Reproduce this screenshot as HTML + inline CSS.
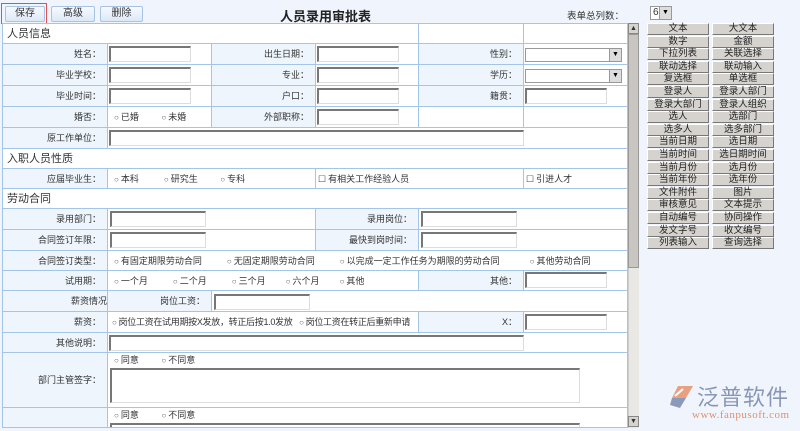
<!DOCTYPE html>
<html><head><meta charset="utf-8">
<style>
*{margin:0;padding:0;box-sizing:border-box}
body{width:800px;height:431px;overflow:hidden;background:#f0f5fd;font-family:"Liberation Sans","Noto Sans CJK SC",sans-serif;font-size:9px;color:#333;position:relative}
.a{position:absolute}
.btn{position:absolute;top:6px;height:16px;border:1px solid #a9c3e3;background:linear-gradient(#f7faff,#dce8f7);text-align:center;line-height:14px;font-size:10px;color:#333;border-radius:2px}
.form{position:absolute;left:2px;top:23px;width:626px;height:405px;background:#fff;border:1px solid #a3c6e8;overflow:hidden}
.c{position:absolute;border-right:1px solid #a3c6e8;border-bottom:1px solid #a3c6e8;background:#fff;white-space:nowrap;line-height:21px;font-size:9px}
.l{background:#eef5fd;text-align:right;padding-right:6px}
.sec{font-size:11px;padding-left:4px;color:#333}
.in{position:absolute;height:16px;border:1px solid #ddd;border-top:2px solid #777;border-left:2px solid #777;background:#fff}
.sel{position:absolute;height:14px;border:1px solid #999;background:#fff}
.arr{position:absolute;right:0;top:0;width:12px;height:12px;background:#ddd;border-left:1px solid #999;font-size:7px;line-height:12px;text-align:center;color:#000}
.r::before{content:"○";font-size:8px;margin-right:2px;color:#555}
.k::before{content:"☐";font-size:9px;margin-right:2px;color:#444}
.pb{position:absolute;width:62px;height:12px;background:#d6d3ce;border:1px solid #fff;border-right-color:#777;border-bottom-color:#777;font-size:9.5px;line-height:10px;text-align:center;color:#222}
</style></head><body>
<div class="btn" style="left:5px;width:40px">保存</div>
<div class="a" style="left:1px;top:3px;width:46px;height:21px;border:1px solid #e05050"></div>
<div class="btn" style="left:51px;width:44px">高级</div>
<div class="btn" style="left:100px;width:43px">删除</div>
<div class="a" style="left:280px;top:6px;font-size:13px;font-weight:bold;color:#222">人员录用审批表</div>
<div class="a" style="left:567px;top:8px;font-size:9.5px">表单总列数：</div>
<div class="sel" style="left:650px;top:6px;width:22px;font-size:10px;line-height:12px;padding-left:2px">6<span class="arr">▼</span></div>

<div class="form">
<div class="c sec" style="left:0;top:0;width:416px;height:20px;line-height:20px">人员信息</div>
<div class="c" style="left:416px;top:0;width:105px;height:20px"></div>
<div class="c" style="left:521px;top:0;width:110px;height:20px"></div>

<div class="c l" style="left:0;top:20px;width:105px;height:21px">姓名：</div>
<div class="c" style="left:105px;top:20px;width:104px;height:21px"></div>
<div class="c l" style="left:209px;top:20px;width:104px;height:21px">出生日期：</div>
<div class="c" style="left:313px;top:20px;width:103px;height:21px"></div>
<div class="c l" style="left:416px;top:20px;width:105px;height:21px">性别：</div>
<div class="c" style="left:521px;top:20px;width:110px;height:21px"></div>

<div class="c l" style="left:0;top:41px;width:105px;height:21px">毕业学校：</div>
<div class="c" style="left:105px;top:41px;width:104px;height:21px"></div>
<div class="c l" style="left:209px;top:41px;width:104px;height:21px">专业：</div>
<div class="c" style="left:313px;top:41px;width:103px;height:21px"></div>
<div class="c l" style="left:416px;top:41px;width:105px;height:21px">学历：</div>
<div class="c" style="left:521px;top:41px;width:110px;height:21px"></div>

<div class="c l" style="left:0;top:62px;width:105px;height:21px">毕业时间：</div>
<div class="c" style="left:105px;top:62px;width:104px;height:21px"></div>
<div class="c l" style="left:209px;top:62px;width:104px;height:21px">户口：</div>
<div class="c" style="left:313px;top:62px;width:103px;height:21px"></div>
<div class="c l" style="left:416px;top:62px;width:105px;height:21px">籍贯：</div>
<div class="c" style="left:521px;top:62px;width:110px;height:21px"></div>

<div class="c l" style="left:0;top:83px;width:105px;height:21px">婚否：</div>
<div class="c" style="left:105px;top:83px;width:104px;height:21px;padding-left:6px"><span class="r">已婚</span>&nbsp;&nbsp;&nbsp;&nbsp;&nbsp;&nbsp;&nbsp;&nbsp;&nbsp;<span class="r">未婚</span></div>
<div class="c l" style="left:209px;top:83px;width:104px;height:21px">外部职称：</div>
<div class="c" style="left:313px;top:83px;width:103px;height:21px"></div>
<div class="c" style="left:416px;top:83px;width:105px;height:21px"></div>
<div class="c" style="left:521px;top:83px;width:110px;height:21px"></div>

<div class="c l" style="left:0;top:104px;width:105px;height:21px">原工作单位：</div>
<div class="c" style="left:105px;top:104px;width:526px;height:21px"></div>

<div class="c sec" style="left:0;top:125px;width:631px;height:20px;line-height:20px">入职人员性质</div>
<div class="c l" style="left:0;top:145px;width:105px;height:20px;line-height:20px">应届毕业生：</div>
<div class="c" style="left:105px;top:145px;width:208px;height:20px;line-height:20px;padding-left:6px"><span class="r">本科</span>&nbsp;&nbsp;&nbsp;&nbsp;&nbsp;&nbsp;&nbsp;&nbsp;&nbsp;&nbsp;<span class="r">研究生</span>&nbsp;&nbsp;&nbsp;&nbsp;&nbsp;&nbsp;&nbsp;&nbsp;&nbsp;<span class="r">专科</span></div>
<div class="c" style="left:313px;top:145px;width:208px;height:20px;line-height:20px;padding-left:2px"><span class="k">有相关工作经验人员</span></div>
<div class="c" style="left:521px;top:145px;width:110px;height:20px;line-height:20px;padding-left:2px"><span class="k">引进人才</span></div>

<div class="c sec" style="left:0;top:165px;width:631px;height:20px;line-height:20px">劳动合同</div>
<div class="c l" style="left:0;top:185px;width:105px;height:21px">录用部门：</div>
<div class="c" style="left:105px;top:185px;width:208px;height:21px"></div>
<div class="c l" style="left:313px;top:185px;width:103px;height:21px">录用岗位：</div>
<div class="c" style="left:416px;top:185px;width:215px;height:21px"></div>
<div class="c l" style="left:0;top:206px;width:105px;height:21px">合同签订年限：</div>
<div class="c" style="left:105px;top:206px;width:208px;height:21px"></div>
<div class="c l" style="left:313px;top:206px;width:103px;height:21px">最快到岗时间：</div>
<div class="c" style="left:416px;top:206px;width:215px;height:21px"></div>

<div class="c l" style="left:0;top:227px;width:105px;height:20px;line-height:20px">合同签订类型：</div>
<div class="c" style="left:105px;top:227px;width:526px;height:20px;line-height:20px;padding-left:6px"><span class="r">有固定期限劳动合同</span>&nbsp;&nbsp;&nbsp;&nbsp;&nbsp;&nbsp;&nbsp;&nbsp;&nbsp;&nbsp;<span class="r">无固定期限劳动合同</span>&nbsp;&nbsp;&nbsp;&nbsp;&nbsp;&nbsp;&nbsp;&nbsp;&nbsp;&nbsp;<span class="r">以完成一定工作任务为期限的劳动合同</span>&nbsp;&nbsp;&nbsp;&nbsp;&nbsp;&nbsp;&nbsp;&nbsp;&nbsp;&nbsp;&nbsp;&nbsp;<span class="r">其他劳动合同</span></div>

<div class="c l" style="left:0;top:247px;width:105px;height:20px;line-height:20px">试用期：</div>
<div class="c" style="left:105px;top:247px;width:311px;height:20px;line-height:20px;padding-left:6px"><span class="r">一个月</span>&nbsp;&nbsp;&nbsp;&nbsp;&nbsp;&nbsp;&nbsp;&nbsp;&nbsp;&nbsp;<span class="r">二个月</span>&nbsp;&nbsp;&nbsp;&nbsp;&nbsp;&nbsp;&nbsp;&nbsp;&nbsp;&nbsp;<span class="r">三个月</span>&nbsp;&nbsp;&nbsp;&nbsp;&nbsp;&nbsp;&nbsp;&nbsp;<span class="r">六个月</span>&nbsp;&nbsp;&nbsp;&nbsp;&nbsp;&nbsp;&nbsp;&nbsp;<span class="r">其他</span></div>
<div class="c l" style="left:416px;top:247px;width:105px;height:20px;line-height:20px">其他：</div>
<div class="c" style="left:521px;top:247px;width:110px;height:20px"></div>

<div class="c l" style="left:0;top:267px;width:105px;height:21px;padding-right:0">薪资情况</div>
<div class="c l" style="left:105px;top:267px;width:104px;height:21px">岗位工资：</div>
<div class="c" style="left:209px;top:267px;width:422px;height:21px"></div>

<div class="c l" style="left:0;top:288px;width:105px;height:21px">薪资：</div>
<div class="c" style="left:105px;top:288px;width:311px;height:21px;padding-left:4px;letter-spacing:-0.3px"><span class="r">岗位工资在试用期按X发放，转正后按1.0发放</span>&nbsp;&nbsp;&nbsp;<span class="r">岗位工资在转正后重新申请</span></div>
<div class="c l" style="left:416px;top:288px;width:105px;height:21px">X：</div>
<div class="c" style="left:521px;top:288px;width:110px;height:21px"></div>

<div class="c l" style="left:0;top:309px;width:105px;height:20px;line-height:20px">其他说明：</div>
<div class="c" style="left:105px;top:309px;width:526px;height:20px"></div>

<div class="c l" style="left:0;top:329px;width:105px;height:55px;line-height:55px">部门主管签字：</div>
<div class="c" style="left:105px;top:329px;width:526px;height:55px;line-height:14px;padding-left:6px"><span class="r">同意</span>&nbsp;&nbsp;&nbsp;&nbsp;&nbsp;&nbsp;&nbsp;&nbsp;&nbsp;<span class="r">不同意</span></div>
<div class="c l" style="left:0;top:384px;width:105px;height:30px"></div>
<div class="c" style="left:105px;top:384px;width:526px;height:30px;line-height:14px;padding-left:6px"><span class="r">同意</span>&nbsp;&nbsp;&nbsp;&nbsp;&nbsp;&nbsp;&nbsp;&nbsp;&nbsp;<span class="r">不同意</span></div>

<div class="in" style="left:106px;top:22px;width:82px"></div>
<div class="in" style="left:314px;top:22px;width:82px"></div>
<div class="sel" style="left:522px;top:24px;width:97px"><span class="arr">▼</span></div>
<div class="in" style="left:106px;top:43px;width:82px"></div>
<div class="in" style="left:314px;top:43px;width:82px"></div>
<div class="sel" style="left:522px;top:45px;width:97px"><span class="arr">▼</span></div>
<div class="in" style="left:106px;top:64px;width:82px"></div>
<div class="in" style="left:314px;top:64px;width:82px"></div>
<div class="in" style="left:522px;top:64px;width:82px"></div>
<div class="in" style="left:314px;top:85px;width:82px"></div>
<div class="in" style="left:106px;top:106px;width:415px"></div>
<div class="in" style="left:107px;top:187px;width:96px"></div>
<div class="in" style="left:418px;top:187px;width:96px"></div>
<div class="in" style="left:107px;top:208px;width:96px"></div>
<div class="in" style="left:418px;top:208px;width:96px"></div>
<div class="in" style="left:522px;top:248px;width:82px"></div>
<div class="in" style="left:211px;top:270px;width:96px"></div>
<div class="in" style="left:522px;top:290px;width:82px"></div>
<div class="in" style="left:106px;top:311px;width:415px"></div>
<div class="in" style="left:107px;top:344px;width:470px;height:35px"></div>
<div class="in" style="left:107px;top:399px;width:470px;height:20px"></div>
</div>

<div class="a" style="left:628px;top:23px;width:11px;height:405px;background:#eae8e4;border-left:1px solid #ccc"></div>
<div class="a" style="left:628px;top:23px;width:11px;height:11px;background:#d6d3ce;border:1px solid #888;font-size:7px;text-align:center;line-height:9px">▲</div>
<div class="a" style="left:628px;top:34px;width:11px;height:234px;background:#c9c6c1;border:1px solid #999"></div>
<div class="a" style="left:628px;top:416px;width:11px;height:11px;background:#d6d3ce;border:1px solid #888;font-size:7px;text-align:center;line-height:9px">▼</div>

<div class="pb" style="left:647px;top:23px">文本</div><div class="pb" style="left:712px;top:23px">大文本</div>
<div class="pb" style="left:647px;top:36px">数字</div><div class="pb" style="left:712px;top:36px">金额</div>
<div class="pb" style="left:647px;top:48px">下拉列表</div><div class="pb" style="left:712px;top:48px">关联选择</div>
<div class="pb" style="left:647px;top:61px">联动选择</div><div class="pb" style="left:712px;top:61px">联动输入</div>
<div class="pb" style="left:647px;top:73px">复选框</div><div class="pb" style="left:712px;top:73px">单选框</div>
<div class="pb" style="left:647px;top:86px">登录人</div><div class="pb" style="left:712px;top:86px">登录人部门</div>
<div class="pb" style="left:647px;top:99px">登录大部门</div><div class="pb" style="left:712px;top:99px">登录人组织</div>
<div class="pb" style="left:647px;top:111px">选人</div><div class="pb" style="left:712px;top:111px">选部门</div>
<div class="pb" style="left:647px;top:124px">选多人</div><div class="pb" style="left:712px;top:124px">选多部门</div>
<div class="pb" style="left:647px;top:136px">当前日期</div><div class="pb" style="left:712px;top:136px">选日期</div>
<div class="pb" style="left:647px;top:149px">当前时间</div><div class="pb" style="left:712px;top:149px">选日期时间</div>
<div class="pb" style="left:647px;top:162px">当前月份</div><div class="pb" style="left:712px;top:162px">选月份</div>
<div class="pb" style="left:647px;top:174px">当前年份</div><div class="pb" style="left:712px;top:174px">选年份</div>
<div class="pb" style="left:647px;top:187px">文件附件</div><div class="pb" style="left:712px;top:187px">图片</div>
<div class="pb" style="left:647px;top:199px">审核意见</div><div class="pb" style="left:712px;top:199px">文本提示</div>
<div class="pb" style="left:647px;top:212px">自动编号</div><div class="pb" style="left:712px;top:212px">协同操作</div>
<div class="pb" style="left:647px;top:225px">发文字号</div><div class="pb" style="left:712px;top:225px">收文编号</div>
<div class="pb" style="left:647px;top:237px">列表输入</div><div class="pb" style="left:712px;top:237px">查询选择</div>

<svg class="a" style="left:669px;top:385px" width="26" height="24" viewBox="0 0 26 24">
<path d="M9 1 L24 1 L17 13 L3 13 Z" fill="#e8a080"/>
<path d="M3 13 L17 13 L11 23 L1 20 Z" fill="#8a9ab8"/>
<path d="M6 11 L14 4" stroke="#fff" stroke-width="2"/>
</svg>
<div class="a" style="left:697px;top:383px;font-size:22px;color:#8a96b5;font-family:'Noto Sans CJK SC',sans-serif;letter-spacing:1px;line-height:26px">泛普软件</div>
<div class="a" style="left:692px;top:409px;font-size:11px;color:#e09070;font-family:'Liberation Serif',serif;letter-spacing:0.5px">www.fanpusoft.com</div>
</body></html>
